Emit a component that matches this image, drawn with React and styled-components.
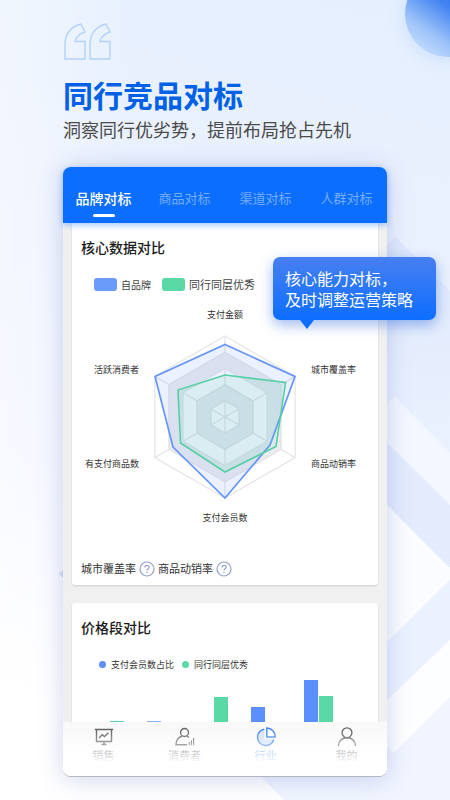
import React, {useState} from 'react'
import styled, {createGlobalStyle} from 'styled-components'

const tabs = ['品牌对标', '商品对标', '渠道对标', '人群对标']

const CX = 153
const CY = 117
const R = 81

function hexagon(r) {
  const dx = r * 0.866
  return [
    [CX, CY - r], [CX + dx, CY - r / 2], [CX + dx, CY + r / 2],
    [CX, CY + r], [CX - dx, CY + r / 2], [CX - dx, CY - r / 2],
  ].map(p => p.join(',')).join(' ')
}

const rings = [
  {r: R, fill: '#ffffff', line: '#e6e6e8'},
  {r: R * 0.8, fill: '#ececf0', line: '#e4e4e6'},
  {r: R * 0.6, fill: '#ffffff', line: '#e6e6e8'},
  {r: R * 0.4, fill: '#ececf0', line: '#e2e2e5'},
  {r: R * 0.2, fill: '#ffffff', line: '#e2e2e5'},
]

// spokes are only visible on the white rings
const spokes = rings.filter((g, i) => i % 2 === 0).flatMap(g => {
  const inner = g.r > R * 0.3 ? g.r - R * 0.2 : 0
  return [30, 90, 150, 210, 270, 330].map(deg => {
    const a = deg * Math.PI / 180
    return {
      key: g.r + '-' + deg,
      x1: CX + inner * Math.cos(a),
      y1: CY + inner * Math.sin(a),
      x2: CX + g.r * Math.cos(a),
      y2: CY + g.r * Math.sin(a),
    }
  })
})

const axes = [
  {name: '支付金额', x: 153, y: 18, anchor: 'middle'},
  {name: '城市覆盖率', x: 239, y: 73, anchor: 'start'},
  {name: '商品动销率', x: 239, y: 167, anchor: 'start'},
  {name: '支付会员数', x: 153, y: 221, anchor: 'middle'},
  {name: '有支付商品数', x: 67, y: 167, anchor: 'end'},
  {name: '活跃消费者', x: 67, y: 73, anchor: 'end'},
]

const bars = [
  {x: 38, h: 1, color: '#5ad8a6'},
  {x: 75, h: 1, color: '#8fb3f5'},
  {x: 142, h: 25, color: '#5ad8a6'},
  {x: 179, h: 15, color: '#5b8ff9'},
  {x: 232, h: 42, color: '#5b8ff9'},
  {x: 247, h: 26, color: '#5ad8a6'},
]

function Radar() {
  return (
    <Chart viewBox="0 0 306 240" role="img" aria-label="核心数据对比">
      {rings.map(g => <polygon key={g.r} points={hexagon(g.r)} fill={g.fill} stroke={g.line} strokeWidth="1.3" />)}
      {spokes.map(({key, ...line}) => <line key={key} {...line} stroke="#e2e4e8" strokeWidth="1.2" />)}
      <polygon points="153,44.5 223,76.5 198,145 153,198 101,147 83,76.5"
        fill="#5b8ff9" fillOpacity=".12" stroke="#6495f7" strokeWidth="1.7" />
      <polygon points="153,75 213.5,82.5 204,146.5 153,172 108.5,143 106,90"
        fill="#5ad8a6" fillOpacity=".12" stroke="#54d0a4" strokeWidth="1.6" />
      {axes.map(a => <AxisLabel key={a.name} x={a.x} y={a.y} textAnchor={a.anchor}>{a.name}</AxisLabel>)}
    </Chart>
  )
}

function Help({label}) {
  return (
    <HelpButton type="button" aria-label={label}>
      <svg width="16" height="16" viewBox="0 0 16 16" fill="none" stroke="#94a0ce" strokeWidth="1.2">
        <circle cx="8" cy="8" r="7" />
        <path d="M5.9 6.4C5.9 3.6 10.2 3.7 10.2 6.2C10.2 7.8 8 7.8 8 9.6" />
        <path d="M8 10.8V12" />
      </svg>
    </HelpButton>
  )
}

function SalesIcon() {
  return (
    <NavIcon viewBox="0 0 20 20">
      <path d="M.8 2.500H19.200M2.500 2.500V14.500H17.500V2.500M10 14.500V17M7.500 17.500H12.500" />
      <path d="M5 11L8.200 7.800L10.500 9.600L14.500 5.800" />
    </NavIcon>
  )
}

function CustomerIcon() {
  return (
    <NavIcon viewBox="0 0 20 20">
      <circle cx="9.5" cy="5.5" r="4" />
      <path d="M7 9.200C3.400 10.400 1.200 13 .9 17.700H12M11.800 9.200L14 10.500" />
      <path d="M14.200 18.300V15M16.400 18.300V13.200M18.600 18.300V11" strokeWidth="1.1" />
    </NavIcon>
  )
}

function IndustryIcon() {
  return (
    <NavIcon viewBox="0 0 20 20">
      <path d="M8.300 2.100A8.200 8.200 0 1 0 17.800 12.300H8.300Z" fill="#d6e3fb" stroke="none" />
      <path d="M8.300 2.100A8.300 8.300 0 1 0 17.800 12.500" />
      <path d="M10.800 1V10H19.200A8.600 8.600 0 0 0 10.800 1Z" fill="#fff" />
    </NavIcon>
  )
}

function MineIcon() {
  return (
    <NavIcon viewBox="0 0 20 20">
      <circle cx="10" cy="5.800" r="4.900" />
      <path d="M1.400 19C1.600 14 5 10.800 10 10.800S18.400 14 18.600 19" />
    </NavIcon>
  )
}

const navItems = [
  {name: '销售', Icon: SalesIcon},
  {name: '消费者', Icon: CustomerIcon},
  {name: '行业', Icon: IndustryIcon},
  {name: '我的', Icon: MineIcon},
]

function App() {
  const [tab, setTab] = useState(tabs[0])
  const [page, setPage] = useState('行业')

  return (
    <Page>
      <Global />
      <Backdrop viewBox="0 0 450 800" preserveAspectRatio="none" aria-hidden="true">
        <defs>
          <linearGradient id="band" x1="0" y1="0" x2="0" y2="1">
            <stop offset="0" stopColor="#dee8fb" />
            <stop offset="1" stopColor="#e6effe" stopOpacity=".5" />
          </linearGradient>
        </defs>
        <path d="M395 237L450 291V453L395 397L380 412V252Z" fill="url(#band)" />
        <path d="M395 397L450 453V505L380 436V412Z" fill="#f3f7ff" />
        <path d="M380 436L450 505V568L380 498Z" fill="#e3ebfc" />
        <path d="M380 498L450 568V580L380 649Z" fill="#fafcff" />
        <path d="M380 649L450 580V640L380 707Z" fill="#ebf2fe" />
        <path d="M380 707L450 640V697L394 753L380 740Z" fill="#fdfeff" />
        <path d="M240 755L380 740L394 753L450 697V800H284Z" fill="#f1f5ff" />
        <path d="M59 574L66 567V581Z" fill="#d3def7" />
      </Backdrop>
      <Orb />

      <Intro>
        <Quote viewBox="0 0 48 38" aria-hidden="true">
          <path d="M17 1L21 9C15 11 12 14 11 18.500H21V36H1V22C1 11 6 4 17 1Z" />
          <path d="M42 1L46 9C40 11 37 14 36 18.500H46V36H26V22C26 11 31 4 42 1Z" />
        </Quote>
        <Title>同行竞品对标</Title>
        <Subtitle>洞察同行优劣势，提前布局抢占先机</Subtitle>
      </Intro>

      <Phone>
        <Tabs>
          {tabs.map(t => <Tab key={t} type="button" $active={t === tab} onClick={() => setTab(t)}>{t}</Tab>)}
        </Tabs>

        <Content>
          <Card>
            <CardTitle>核心数据对比</CardTitle>
            <Legend>
              <Swatch $color="#6a9bfa" />
              <LegendText>自品牌</LegendText>
              <Swatch $color="#5ad8a6" />
              <LegendText $large>同行同层优秀</LegendText>
            </Legend>
            <Radar />
            <Notes>
              <span>城市覆盖率</span>
              <Help label="城市覆盖率说明" />
              <span>商品动销率</span>
              <Help label="商品动销率说明" />
            </Notes>
          </Card>

          <Card $cut>
            <CardTitle>价格段对比</CardTitle>
            <DotLegend>
              <Dot $color="#5b8ff9" />
              <span>支付会员数占比</span>
              <Dot $color="#5ad8a6" />
              <span>同行同层优秀</span>
            </DotLegend>
            <Chart viewBox="0 0 306 42" role="img" aria-label="价格段对比">
              {bars.map(b => <rect key={b.x} x={b.x} y={42 - b.h} width="14" height={b.h} fill={b.color} />)}
            </Chart>
          </Card>
        </Content>

        <Nav>
          {navItems.map(({name, Icon}) => (
            <NavItem key={name} type="button" $active={name === page} onClick={() => setPage(name)}>
              <Icon />
              <span>{name}</span>
            </NavItem>
          ))}
        </Nav>

        <Tip>核心能力对标，<br />及时调整运营策略</Tip>
      </Phone>
    </Page>
  )
}

const Global = createGlobalStyle`
  * {
    box-sizing: border-box;
  }
  body {
    margin: 0;
    font-family: "Liberation Sans", "Noto Sans CJK SC", sans-serif;
  }
  button {
    font-family: inherit;
    border: 0;
    padding: 0;
    background: none;
    cursor: pointer;
  }
`
const Page = styled.main`
  position: relative;
  min-height: 100vh;
  padding: 23px 14%;
  overflow: hidden;
  background:
    linear-gradient(90deg, rgba(255,255,255,.4), rgba(255,255,255,0) 30%),
    linear-gradient(195deg, #e5f0fe 0%, #ebf1fe 30%, #f3f6ff 62%, #ffffff 88%);
`
const Backdrop = styled.svg`
  position: absolute;
  top: 0;
  left: 0;
  width: 100%;
  height: 100%;
`
const Orb = styled.div`
  position: absolute;
  top: -29px;
  right: -41px;
  width: 86px;
  height: 86px;
  border-radius: 50%;
  background: linear-gradient(215deg, #1f68ee 15%, #4284f2 45%, #9fc4f9 72%, #cfe3fd 95%);
  box-shadow: 0 3px 16px rgba(120, 170, 250, .25);
`
const Intro = styled.header`
  position: relative;
`
const Quote = styled.svg`
  display: block;
  width: 48px;
  height: 38px;
  margin-left: 1px;
  fill: none;
  stroke: #b3d2fd;
  stroke-width: 1.4;
`
const Title = styled.h1`
  margin: 16px 0 0;
  font-size: 30px;
  line-height: 40px;
  font-weight: 700;
  color: #0060e6;
`
const Subtitle = styled.p`
  margin: 0;
  font-size: 18px;
  line-height: 28px;
  white-space: nowrap;
  color: #4a4a4a;
`
const Phone = styled.section`
  position: relative;
  margin-top: 22px;
  border-radius: 8px;
  background: #f0f0f0;
  box-shadow: 0 2px 24px rgba(95, 115, 195, .3);
`
const Tabs = styled.nav`
  position: relative;
  z-index: 1;
  display: grid;
  grid-template-columns: repeat(4, 1fr);
  height: 56px;
  padding-top: 20px;
  border-radius: 8px 8px 0 0;
  background: #0b6eff;
  box-shadow: 0 2px 6px rgba(11, 110, 255, .4);
`
const Tab = styled.button`
  display: flex;
  flex-direction: column;
  align-items: center;
  font-size: ${p => p.$active ? 14 : 13}px;
  line-height: 24px;
  font-weight: ${p => p.$active ? 500 : 400};
  color: ${p => p.$active ? '#fff' : '#76adff'};
  &::after {
    content: '';
    width: 22px;
    height: 3px;
    margin-top: 3px;
    border-radius: 2px;
    background: ${p => p.$active ? '#fff' : 'transparent'};
  }
`
const Content = styled.div`
  display: flex;
  flex-direction: column;
  gap: 18px;
  padding: 0 9px;
`
const Card = styled.article`
  padding-top: 15px;
  border-radius: ${p => p.$cut ? '3px 3px 0 0' : '0 0 3px 3px'};
  background: #fff;
  box-shadow: 0 1px 2px rgba(0, 0, 0, .14);
`
const CardTitle = styled.h2`
  margin: 0;
  padding-left: 9px;
  font-size: 14px;
  line-height: 20px;
  font-weight: 500;
  color: #1c1c1c;
`
const Legend = styled.div`
  display: flex;
  align-items: center;
  height: 20px;
  margin-top: 16px;
  padding-left: 22px;
  color: #444;
`
const Swatch = styled.i`
  width: 23px;
  height: 13px;
  margin-right: 4px;
  border-radius: 3px;
  background: ${p => p.$color};
`
const LegendText = styled.span`
  margin-right: 11px;
  font-size: ${p => p.$large ? 11 : 10}px;
`
const Chart = styled.svg`
  display: block;
  width: 100%;
  height: auto;
  ${Legend} + & {
    margin-top: 6px;
  }
`
const AxisLabel = styled.text`
  font-size: 9px;
  fill: #333;
`
const Notes = styled.div`
  display: flex;
  align-items: center;
  gap: 3px;
  margin-top: 21px;
  padding: 0 9px 8px;
  font-size: 11px;
  line-height: 16px;
  color: #333;
`
const HelpButton = styled.button`
  height: 16px;
  & svg {
    display: block;
  }
`
const DotLegend = styled.div`
  display: flex;
  align-items: center;
  height: 16px;
  margin: 18px 0 8px;
  padding-left: 27px;
  font-size: 9px;
  color: #333;
`
const Dot = styled.i`
  width: 7px;
  height: 7px;
  margin-right: 5px;
  border-radius: 50%;
  background: ${p => p.$color};
  span + & {
    margin-left: 8px;
  }
`
const Nav = styled.nav`
  position: relative;
  display: grid;
  grid-template-columns: repeat(4, 1fr);
  height: 55px;
  padding-top: 5px;
  border-bottom: 1px solid #b5b7c0;
  border-radius: 0 0 8px 8px;
  background: linear-gradient(#f8f8f8, #ffffff 75%);
  &::after {
    content: '';
    position: absolute;
    inset: 0;
    border-radius: 0 0 8px 8px;
    background: linear-gradient(rgba(255,255,255,0) 15%, rgba(255,255,255,.5) 48%, #fff 76%);
    pointer-events: none;
  }
`
const NavItem = styled.button`
  display: flex;
  flex-direction: column;
  align-items: center;
  gap: 1px;
  font-size: 11px;
  line-height: 16px;
  color: ${p => p.$active ? '#4387f0' : '#666'};
`
const NavIcon = styled.svg`
  width: 20px;
  height: 20px;
  fill: none;
  stroke: currentColor;
  stroke-width: 1.4;
`
const Tip = styled.aside`
  position: absolute;
  z-index: 2;
  top: 90px;
  right: -49px;
  padding: 12px 23px 9px 12px;
  border-radius: 7px;
  font-size: 16px;
  line-height: 21px;
  white-space: nowrap;
  color: #fff;
  background: linear-gradient(#477ff1, #0d6eff);
  box-shadow: 0 5px 14px rgba(25, 90, 220, .42);
  &::after {
    content: '';
    position: absolute;
    top: 100%;
    left: 27px;
    border: 7px solid transparent;
    border-top: 9px solid #0d6eff;
    border-bottom: 0;
  }
`

export default App
